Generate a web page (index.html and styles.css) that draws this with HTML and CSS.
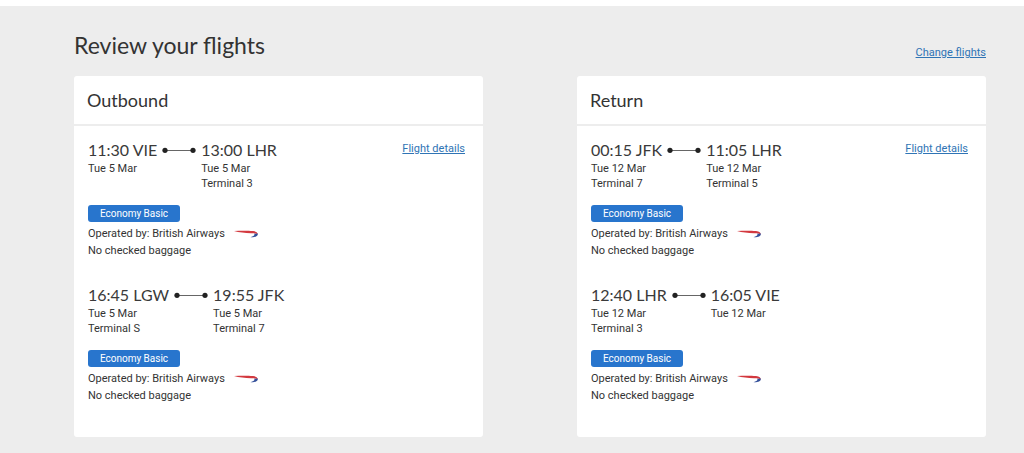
FILE: index.html
```
<!DOCTYPE html>
<html lang="en">
<head>
<meta charset="utf-8">
<meta name="viewport" content="width=device-width, initial-scale=1">
<title>Review your flights</title>
<link rel="stylesheet" href="styles.css">
</head>
<body>
<svg class="defs" aria-hidden="true">
  <symbol id="route" viewBox="0 0 34 6"><path d="M3 3.500H31" stroke="#666" stroke-width="1"/><circle cx="3" cy="3.300" r="2.600" fill="#222"/><circle cx="31" cy="3.300" r="2.600" fill="#222"/></symbol>
  <symbol id="ribbon" viewBox="0 0 24 8"><path d="M0 1C7 .6 14 .6 19 1.100C22.500 1.500 24 3 23.500 4.600C22.500 3.500 20.500 3.300 17 3.200C11 3.100 5 2.300 0 1Z" fill="#d3393f"/><path d="M23.600 3.300C24.600 5.700 21.500 7.500 16.500 7.200C19.500 6.400 21 5.500 20.300 3.400C21.500 3.600 22.800 4 23.600 3.300Z" fill="#34509a"/></symbol>
</svg>
<main class="review">
  <header class="review-head">
    <h1 class="title">Review your flights</h1>
    <a class="link" href="#">Change flights</a>
  </header>
  <div class="cards">
    <section class="card">
      <h2 class="card-title">Outbound</h2>
      <div class="card-body">
        <a class="link details" href="#">Flight details</a>
        <article class="segment">
          <div class="times">
            <div class="stop"><p class="time">11:30 VIE</p><p>Tue 5 Mar</p></div>
            <svg class="route" aria-hidden="true"><use href="#route"/></svg>
            <div class="stop"><p class="time">13:00 LHR</p><p>Tue 5 Mar</p><p>Terminal 3</p></div>
          </div>
          <span class="badge">Economy Basic</span>
          <p class="info">Operated by: British Airways<svg class="ribbon" aria-hidden="true"><use href="#ribbon"/></svg></p>
          <p class="info">No checked baggage</p>
        </article>
        <article class="segment">
          <div class="times">
            <div class="stop"><p class="time">16:45 LGW</p><p>Tue 5 Mar</p><p>Terminal S</p></div>
            <svg class="route" aria-hidden="true"><use href="#route"/></svg>
            <div class="stop"><p class="time">19:55 JFK</p><p>Tue 5 Mar</p><p>Terminal 7</p></div>
          </div>
          <span class="badge">Economy Basic</span>
          <p class="info">Operated by: British Airways<svg class="ribbon" aria-hidden="true"><use href="#ribbon"/></svg></p>
          <p class="info">No checked baggage</p>
        </article>
      </div>
    </section>
    <section class="card">
      <h2 class="card-title">Return</h2>
      <div class="card-body">
        <a class="link details" href="#">Flight details</a>
        <article class="segment">
          <div class="times">
            <div class="stop"><p class="time">00:15 JFK</p><p>Tue 12 Mar</p><p>Terminal 7</p></div>
            <svg class="route" aria-hidden="true"><use href="#route"/></svg>
            <div class="stop"><p class="time">11:05 LHR</p><p>Tue 12 Mar</p><p>Terminal 5</p></div>
          </div>
          <span class="badge">Economy Basic</span>
          <p class="info">Operated by: British Airways<svg class="ribbon" aria-hidden="true"><use href="#ribbon"/></svg></p>
          <p class="info">No checked baggage</p>
        </article>
        <article class="segment">
          <div class="times">
            <div class="stop"><p class="time">12:40 LHR</p><p>Tue 12 Mar</p><p>Terminal 3</p></div>
            <svg class="route" aria-hidden="true"><use href="#route"/></svg>
            <div class="stop"><p class="time">16:05 VIE</p><p>Tue 12 Mar</p></div>
          </div>
          <span class="badge">Economy Basic</span>
          <p class="info">Operated by: British Airways<svg class="ribbon" aria-hidden="true"><use href="#ribbon"/></svg></p>
          <p class="info">No checked baggage</p>
        </article>
      </div>
    </section>
  </div>
</main>
</body>
</html>
```
FILE: styles.css
```
* { box-sizing: border-box; }
body { margin: 0; background: #fff; color: #333; font: 11px/15px Roboto, "Liberation Sans", sans-serif; }
h1, h2, p { margin: 0; }
.defs { display: none; }
.review { margin-top: 6px; padding: 20px 38px 16px 74px; background: #ededed; }
.review-head { display: flex; justify-content: space-between; align-items: flex-end; height: 40px; margin-bottom: 10px; padding-bottom: 6px; }
.title { font: 400 23px/30px Lato, sans-serif; }
.link { color: #2f74b5; text-decoration: underline; }
.cards { display: grid; grid-template-columns: 1fr 1fr; column-gap: 94px; }
.card { background: #fff; border-radius: 3px; }
.card-title { padding: 12px 13px; border-bottom: 2px solid #ededed; font: 400 18px/24px Lato, sans-serif; }
.card-body { display: flex; flex-direction: row-reverse; flex-wrap: wrap; padding: 13px 18px 33px 14px; }
.details { margin-top: 2px; }
.segment { flex: 1 0 70%; margin-bottom: 25px; }
.segment:last-child { flex-basis: 100%; margin-bottom: 0; }
.times { display: flex; gap: 5px; min-height: 52px; margin-bottom: 14px; }
.time { color: #3a3a3a; font: 400 16px/22px Lato, sans-serif; }
.route { width: 34px; height: 6px; margin-top: 8px; }
.badge { display: block; width: 92px; margin-bottom: 3px; border-radius: 3px; background: #2875cd; color: #fff; font-size: 10px; line-height: 17px; text-align: center; }
.info { display: flex; align-items: center; line-height: 17px; }
.ribbon { width: 24px; height: 8px; margin-left: 9px; }
```
